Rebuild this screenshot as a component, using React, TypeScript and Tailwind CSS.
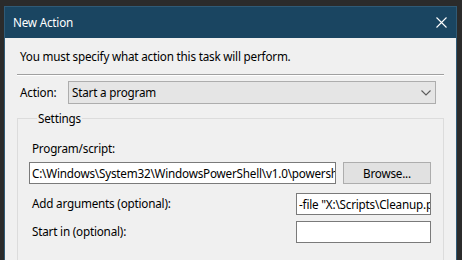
import React from 'react';

const font = { fontFamily: '"Noto Sans", "Open Sans", sans-serif' };

const TitleBar: React.FC = () => (
  <div className="flex h-[31px] items-center justify-between bg-[#1a4561] pl-[8px] pr-[9px] text-white">
    <span>New Action</span>
    <svg width="11" height="11" viewBox="0 0 11 11" className="block">
      <path d="M0.5 0.5 L10.5 10.5 M10.5 0.5 L0.5 10.5" stroke="#ffffff" strokeWidth="1.1" fill="none" />
    </svg>
  </div>
);

const Field: React.FC<{ value?: string; className?: string }> = ({ value = '', className = '' }) => (
  <div className={`h-[22px] overflow-hidden whitespace-nowrap border border-[#7a7a7a] bg-white pl-[2px] leading-[20px] ${className}`}>
    {value}
  </div>
);

export default function App() {
  return (
    <div className="h-[260px] w-[462px] overflow-hidden bg-[#2b2b2b] pl-[4px] pt-[6px] text-[11.7px] tracking-[-0.2px] text-black" style={font}>
      <div className="h-[260px] w-[453px] border border-[#2f5a76] bg-[#f0f0f0]">
        <TitleBar />

        <div className="px-[12px]">
          <p className="pl-[3px] pt-[10px] leading-[16px]">You must specify what action this task will perform.</p>

          <div className="mt-[10px] h-[2px] border-t border-b border-t-[#a0a0a0] border-b-white" />

          <div className="mt-[5px] flex h-[23px] items-center pr-[8px]">
            <span className="w-[51px] pl-[3px]">Action:</span>
            <div className="flex h-[23px] flex-1 items-center justify-between border border-[#adadad] bg-[#e5e5e5] pl-[3px] pr-[4px]">
              <span>Start a program</span>
              <svg width="10" height="6" viewBox="0 0 10 6" className="block">
                <path d="M0.5 0.5 L5 5 L9.5 0.5" stroke="#5a5a5a" strokeWidth="1.1" fill="none" />
              </svg>
            </div>
          </div>

          <fieldset className="mt-[6px] h-[200px] border border-[#dcdcdc] pl-[11px] pr-[12px]">
            <legend className="ml-[8px] px-[1px] leading-[16px]">Settings</legend>

            <div className="mt-[14px] pl-[3px] leading-[16px]">Program/script:</div>
            <div className="mt-[6px] flex gap-[7px]">
              <Field className="w-[307px]" value="C:\Windows\System32\WindowsPowerShell\v1.0\powershell.exe" />
              <button className="h-[22px] w-[88px] border border-[#adadad] bg-[#e1e1e1] leading-[20px]">Browse...</button>
            </div>

            <div className="mt-[9px] flex items-center justify-between">
              <span className="pl-[3px]">Add arguments (optional):</span>
              <Field className="w-[135px]" value={'-file "X:\\Scripts\\Cleanup.ps1"'} />
            </div>

            <div className="mt-[6px] flex items-center justify-between">
              <span className="pl-[3px]">Start in (optional):</span>
              <Field className="w-[135px]" />
            </div>
          </fieldset>
        </div>
      </div>
    </div>
  );
}
